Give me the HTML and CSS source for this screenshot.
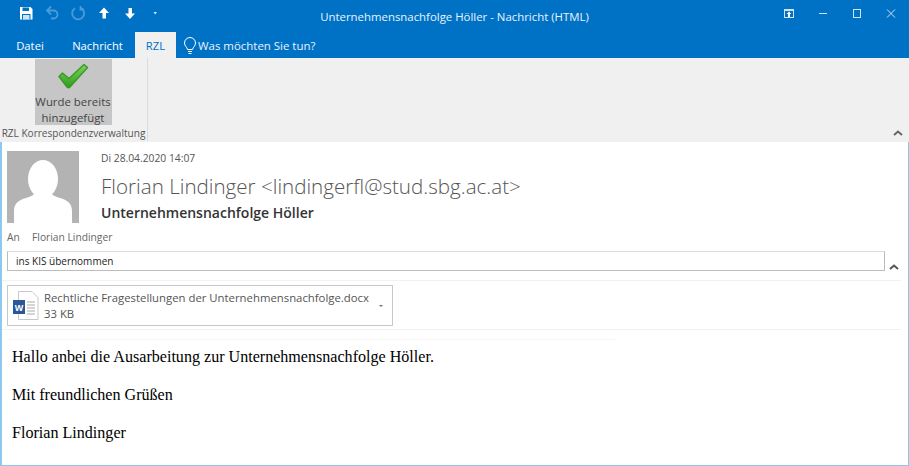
FILE: index.html
```html
<!DOCTYPE html>
<html lang="de">
<head>
<meta charset="utf-8">
<title>Unternehmensnachfolge Höller - Nachricht (HTML)</title>
<link rel="stylesheet" href="styles.css">
</head>
<body>
<div class="window">
  <header class="titlebar">
    <div class="qat">
      <svg class="qi" width="16" height="16" viewBox="0 0 16 16"><path d="M2 2h10.500L14.500 4V14.500H2z" fill="#fff"/><rect x="4.500" y="2.500" width="6.500" height="3.500" fill="#0072c6"/><rect x="4" y="9" width="8.500" height="5.500" fill="#0072c6"/><rect x="5" y="10" width="6.500" height="4.500" fill="#cfe3f4"/></svg>
      <svg class="qi" width="16" height="16" viewBox="0 0 16 16" fill="none" stroke="#4d9ad8" stroke-width="1.800"><path d="M3.500 5.500h6a4 4 0 0 1 0 8H7"/><path d="M7 1.500 3 5.500 7 9.500"/></svg>
      <svg class="qi" width="16" height="16" viewBox="0 0 16 16" fill="none" stroke="#4d9ad8" stroke-width="1.800"><path d="M11 3A6 6 0 1 1 5 3.200"/><path d="M10.500 1v3.500H14"/></svg>
      <svg class="qi" width="16" height="16" viewBox="0 0 16 16"><path d="M8 2.500 13 8H10V13.500H6.500V8H3z" fill="#fff"/></svg>
      <svg class="qi" width="16" height="16" viewBox="0 0 16 16"><path d="M8 14 13 8.500H10V3H6.500V8.500H3z" fill="#fff"/></svg>
      <svg class="qi" width="16" height="16" viewBox="0 0 16 16"><path d="M5.500 7h3.500L7.250 9.500z" fill="#cfe3f4"/></svg>
    </div>
    <div class="title">Unternehmensnachfolge Höller - Nachricht (HTML)</div>
    <div class="winctl">
      <span class="ctl"><svg width="10" height="9" viewBox="0 0 10 9"><rect x=".5" y=".5" width="9" height="8" fill="none" stroke="#cfe3f4"/><rect x="0" y="0" width="10" height="2" fill="#cfe3f4"/><path d="M5 2.500 7.500 5H6V8H4V5H2.500z" fill="#fff"/></svg></span>
      <span class="ctl"><svg width="10" height="9" viewBox="0 0 10 9"><rect x="1" y="4" width="8" height="1" fill="#cfe3f4"/></svg></span>
      <span class="ctl"><svg width="10" height="9" viewBox="0 0 10 9"><rect x="1.500" y=".5" width="7" height="8" fill="none" stroke="#cfe3f4"/></svg></span>
      <span class="ctl"><svg width="10" height="9" viewBox="0 0 10 9"><path d="M1 .5l8 8M9 .5l-8 8" fill="none" stroke="#cfe3f4"/></svg></span>
    </div>
  </header>
  <nav class="tabs">
    <span class="tab datei">Datei</span>
    <span class="tab nachricht">Nachricht</span>
    <span class="tab active">RZL</span>
    <svg class="bulb" width="14" height="18" viewBox="0 0 14 18" fill="none" stroke="#fff"><path d="M4.500 12.500C4 10 1.500 9 1.500 6a5.500 5.500 0 0 1 11 0c0 3-2.500 4-3 6.500z"/><path d="M5 14.500h4M5.500 16.500h3"/></svg>
    <span class="tell">Was möchten Sie tun?</span>
  </nav>
  <section class="ribbon">
    <div class="group">
      <div class="bigbtn">
        <svg width="34" height="26" viewBox="0 0 34 26"><defs><linearGradient id="g" x1="0" y1="0" x2="0" y2="1"><stop offset="0" stop-color="#7bd65a"/><stop offset="1" stop-color="#2f9a1c"/></linearGradient></defs><path d="M3 13.500 6.500 10 13 15.500 28 1.500 31.500 4.500 14 24c-1 1-2 1-3 0z" fill="url(#g)" stroke="#3d9a2a" stroke-width="1.500" stroke-linejoin="round"/></svg>
        <span class="btnlabel">Wurde bereits hinzugefügt</span>
      </div>
      <div class="grouplabel">RZL Korrespondenzverwaltung</div>
    </div>
    <svg class="collapse" width="12" height="8" viewBox="0 0 12 8" fill="none" stroke="#666" stroke-width="2"><path d="M2 6 6 2.500 10 6"/></svg>
  </section>
  <main class="reading">
    <div class="header">
      <div class="avatar">
        <svg width="72" height="72" viewBox="0 0 72 72"><rect width="72" height="72" fill="#b3b3b3"/><ellipse cx="36" cy="28" rx="15" ry="19" fill="#fff"/><path d="M7 72V60c0-8 5-11 12-13 6-2 8-3 9-6h16c1 3 3 4 9 6 7 2 12 5 12 13v12z" fill="#fff"/></svg>
      </div>
      <div class="meta">
        <div class="date">Di 28.04.2020 14:07</div>
        <div class="sender">Florian Lindinger &lt;lindingerfl@stud.sbg.ac.at&gt;</div>
        <div class="subject">Unternehmensnachfolge Höller</div>
      </div>
    </div>
    <div class="to"><span class="an">An</span><span>Florian Lindinger</span></div>
    <div class="catrow">
      <div class="catbox">ins KIS übernommen</div>
      <svg class="catchev" width="12" height="8" viewBox="0 0 12 8" fill="none" stroke="#555" stroke-width="2"><path d="M2 6 6 2.500 10 6"/></svg>
    </div>
    <div class="attachrow">
      <div class="attach">
        <svg width="26" height="30" viewBox="0 0 26 30"><path d="M5.500 .5H19l6 6V28.500H5.500z" fill="#fff" stroke="#c8c8c8"/><path d="M14 11h8M14 14h8M14 17h8M14 20h8M14 23h8" stroke="#aaa"/><rect x="0" y="9" width="12" height="14" fill="#2b579a"/><text class="w" x="6" y="19.500" text-anchor="middle">W</text></svg>
        <div class="attachtext">
          <div>Rechtliche Fragestellungen der Unternehmensnachfolge.docx</div>
          <div>33 KB</div>
        </div>
        <svg class="caret" width="6" height="4" viewBox="0 0 6 4"><path d="M1 1h4L3 3z" fill="#777"/></svg>
      </div>
    </div>
    <div class="rule"></div>
    <div class="body">
      <p>Hallo anbei die Ausarbeitung zur Unternehmensnachfolge Höller.</p>
      <p>Mit freundlichen Grüßen</p>
      <p>Florian Lindinger</p>
    </div>
  </main>
</div>
</body>
</html>
```
FILE: styles.css
```css
* { box-sizing: border-box; }
html, body { margin: 0; height: 100%; overflow: hidden; }
body { font-family: "Open Sans", "Noto Sans", sans-serif; color: #444; background: #fff; }
.window { width: 909px; height: 466px; display: flex; flex-direction: column; }

.titlebar { height: 32px; background: #0072c6; display: flex; align-items: center; padding: 0 0 6px 18px; position: relative; flex: none; }
.qat { display: flex; gap: 10px; align-items: center; }
.qi { display: block; }
.title { position: absolute; left: 0; width: 909px; text-align: center; color: #eaf3fb; font-size: 11.400px; top: 9px; line-height: 16px; }
.winctl { margin-left: auto; display: flex; padding-right: 1px; align-items: center; }
.ctl { width: 34px; display: flex; justify-content: center; }
.ctl svg { display: block; }

.tabs { height: 26px; background: #0072c6; display: flex; align-items: stretch; flex: none; font-size: 11.250px; color: #fff; }
.tab { display: flex; align-items: center; justify-content: center; }
.datei { width: 60px; }
.nachricht { width: 75px; }
.active { width: 41px; background: #f0f0f0; color: #0072c6; }
.bulb { align-self: center; margin: 2px 0 0 7px; }
.tell { align-self: center; margin-left: 1px; color: #eaf3fb; font-size: 11.450px; }

.ribbon { height: 84px; background: #f0f0f0; position: relative; flex: none; display: flex; }
.group { width: 148px; height: 83px; border-right: 1px solid #dcdcdc; display: flex; flex-direction: column; align-items: center; }
.bigbtn { width: 77px; height: 66px; margin-top: 1px; margin-right: 1px; background: #c6c6c6; display: flex; flex-direction: column; align-items: center; padding-top: 4px; }
.bigbtn svg { display: block; flex: none; }
.btnlabel { font-size: 11.400px; line-height: 16px; text-align: center; color: #444; margin-top: 5px; }
.grouplabel { font-size: 10.050px; line-height: 14px; margin-top: 1px; color: #555; white-space: nowrap; }
.collapse { position: absolute; right: 5px; top: 71px; }

.reading { flex: 1; background: #fff; border-left: 2px solid #8ec8f0; border-right: 1px solid #8ec8f0; border-bottom: 1px solid #8ec8f0; min-height: 0; display: flex; flex-direction: column; }
.header { display: flex; padding: 9px 0 0 5px; height: 88px; flex: none; }
.avatar { width: 72px; height: 72px; flex: none; }
.avatar svg { display: block; }
.meta { margin-left: 22px; }
.date { font-size: 10.300px; line-height: 14px; color: #555; }
.sender { font-size: 20.600px; font-weight: 300; line-height: 26px; color: #555; margin-top: 8px; white-space: nowrap; }
.subject { font-size: 14px; font-weight: 600; line-height: 18px; color: #333; margin-top: 5px; }
.to { font-size: 10.250px; line-height: 14px; color: #666; padding-left: 5px; height: 14px; flex: none; }
.an { display: inline-block; width: 25px; }
.catrow { display: flex; align-items: flex-start; margin-top: 7px; padding-left: 5px; flex: none; padding-bottom: 9px; border-bottom: 1px solid #f2f2f2; width: 899px; }
.catbox { width: 878px; height: 20px; flex: none; border: 1px solid #bcbcbc; border-top-color: #dcdcdc; font-size: 10px; color: #222; padding: 0 0 0 8px; line-height: 19px; }
.catchev { margin: 12px 0 0 3px; }
.attachrow { flex: none; padding: 4px 0 3px 5px; border-bottom: 1px solid #f2f2f2; width: 899px; }
.attach { width: 386px; height: 41px; border: 1px solid #c8c8c8; display: flex; align-items: center; padding-left: 5px; position: relative; }
.attach > svg:first-child { flex: none; margin-top: 1px; }
.attachtext { margin-left: 5px; font-size: 11.350px; line-height: 15.500px; color: #555; white-space: nowrap; }
.w { font-family: "Liberation Sans", sans-serif; font-size: 9px; font-weight: 700; fill: #fff; }
.caret { position: absolute; right: 8px; top: 18px; }
.rule { flex: none; width: 608px; height: 1px; margin: 9px 0 0 5px; background: #f5f5f5; }
.body { font-family: "Liberation Serif", serif; font-size: 16.080px; color: #000; line-height: 18px; padding: 8px 0 0 10px; }
.body p { margin: 0 0 20px; }
```
